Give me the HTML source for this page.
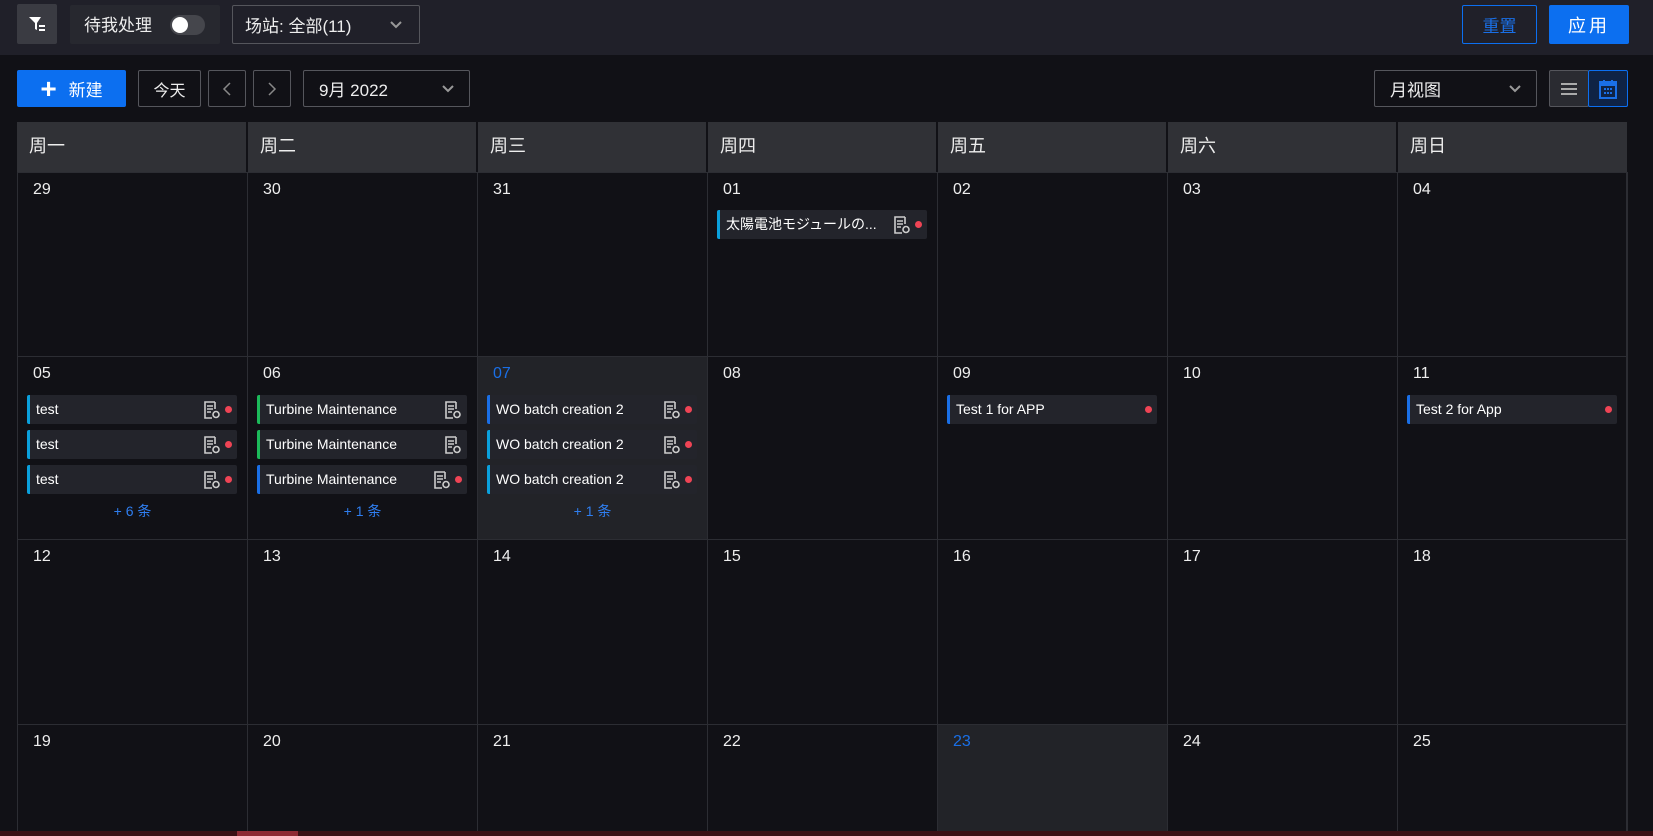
<!DOCTYPE html>
<html><head><meta charset="utf-8"><style>
*{box-sizing:border-box;margin:0;padding:0}
body{width:1653px;height:836px;background:#111116;font-family:"Liberation Sans","Noto Sans CJK SC",sans-serif;color:#fff;position:relative;overflow:hidden}
.a{position:absolute}
.top{left:0;top:0;width:1653px;height:55px;background:#202029}
.btn{position:absolute;border:1px solid #55565c;border-radius:2px;display:flex;align-items:center;justify-content:center;font-size:16px;color:#eee}
.hd{position:absolute;top:122px;height:50px;background:#303136;font-size:18px;padding-left:12px;line-height:48px;color:#eee}
.cell{position:absolute;border-left:1px solid #2c2d33;border-top:1px solid #2c2d33}
.dn{position:absolute;left:15px;top:8px;font-size:16px;color:#eee}
.ev{position:absolute;left:9px;width:210px;height:29px;background:#23242b;border-radius:2px;border-left:3px solid #0aa0dc;font-size:14px;line-height:29px;padding-left:6px;color:#fff;white-space:nowrap}
.ev svg{position:absolute;top:6px}
.dot{position:absolute;right:5px;top:11px;width:7px;height:7px;border-radius:50%;background:#ef4455}
.more{position:absolute;width:100%;text-align:center;font-size:14px;color:#2f7ef0}
</style></head><body>
<div class="a top"></div>
<div class="a" style="left:17px;top:4px;width:40px;height:40px;background:#3a3b42;border-radius:2px"></div>
<svg class="a" style="left:27px;top:14px" width="20" height="20" viewBox="0 0 20 20"><path d="M2 3h12l-4 6v7l-2-1V9z" fill="#fff"/><rect x="12" y="11" width="6" height="2" fill="#fff"/><rect x="12" y="15" width="6" height="2" fill="#fff"/></svg>
<div class="a" style="left:70px;top:5px;width:150px;height:39px;background:#27282f;border-radius:2px"></div>
<div class="a" style="left:84px;top:11px;font-size:17px;color:#eee">待我处理</div>
<div class="a" style="left:170px;top:15px;width:35px;height:20px;border-radius:10px;background:#45464c"></div>
<div class="a" style="left:172px;top:17px;width:16px;height:16px;border-radius:50%;background:#fff"></div>
<div class="btn" style="left:232px;top:5px;width:188px;height:39px;justify-content:flex-start;padding-left:12px;font-size:17px">场站: 全部(11)</div>
<svg class="a" style="left:389px;top:20px" width="14" height="10"><path d="M2 2l5 5 5-5" stroke="#999" stroke-width="2" fill="none"/></svg>
<div class="btn" style="left:1462px;top:5px;width:75px;height:39px;border-color:#0c6ff0;color:#1a6fe6;font-size:17px">重置</div>
<div class="btn" style="left:1549px;top:5px;width:80px;height:39px;border:none;background:#0c6ff0;color:#fff;font-size:18px;letter-spacing:3px">应用</div>

<div class="btn" style="left:17px;top:70px;width:109px;height:37px;border:none;background:#0c6ff0;color:#fff;font-size:17px"><span style="font-size:28px;font-weight:bold;margin-right:12px;line-height:20px">+</span>新建</div>
<div class="btn" style="left:138px;top:70px;width:63px;height:37px">今天</div>
<div class="btn" style="left:208px;top:70px;width:38px;height:37px"><svg width="10" height="16"><path d="M8 2L2 8l6 6" stroke="#888" stroke-width="1.5" fill="none"/></svg></div>
<div class="btn" style="left:253px;top:70px;width:38px;height:37px"><svg width="10" height="16"><path d="M2 2l6 6-6 6" stroke="#888" stroke-width="1.5" fill="none"/></svg></div>
<div class="btn" style="left:303px;top:70px;width:167px;height:37px;justify-content:flex-start;padding-left:15px;font-size:17px">9月 2022</div>
<svg class="a" style="left:441px;top:84px" width="14" height="10"><path d="M2 2l5 5 5-5" stroke="#999" stroke-width="2" fill="none"/></svg>
<div class="btn" style="left:1374px;top:70px;width:163px;height:37px;justify-content:flex-start;padding-left:15px;font-size:17px">月视图</div>
<svg class="a" style="left:1508px;top:84px" width="14" height="10"><path d="M2 2l5 5 5-5" stroke="#999" stroke-width="2" fill="none"/></svg>
<div class="btn" style="left:1549px;top:70px;width:40px;height:37px;background:#2a2b31"><svg width="18" height="14"><path d="M1 2h16M1 7h16M1 12h16" stroke="#aaa" stroke-width="2"/></svg></div>
<div class="btn" style="left:1588px;top:70px;width:40px;height:37px;border-color:#0c6ff0;background:#0f2345"><svg width="18" height="20" viewBox="0 0 18 20"><rect x="1" y="3" width="16" height="16" fill="none" stroke="#1a6fe6" stroke-width="2"/><rect x="1" y="3" width="16" height="4" fill="#1a6fe6"/><path d="M5 1v4M13 1v4" stroke="#1a6fe6" stroke-width="2"/><path d="M5 10h2M8 10h2M11 10h2M5 14h2M8 14h2M11 14h2" stroke="#1a6fe6" stroke-width="2"/></svg></div>

<div class="hd" style="left:17px;width:229px">周一</div>
<div class="hd" style="left:248px;width:228px">周二</div>
<div class="hd" style="left:478px;width:228px">周三</div>
<div class="hd" style="left:708px;width:228px">周四</div>
<div class="hd" style="left:938px;width:228px">周五</div>
<div class="hd" style="left:1168px;width:228px">周六</div>
<div class="hd" style="left:1398px;width:229px">周日</div>

<div id="g"></div>
<div class="a" style="left:1626px;top:172px;width:2px;height:660px;background:#2c2d33"></div>
<div class="a" style="left:0;top:831px;width:1653px;height:5px;background:#3a1015"></div>
<div class="a" style="left:237px;top:831px;width:61px;height:5px;background:#8e2a35"></div>
<script>
var ic='<svg width="16" height="18" viewBox="0 0 16 18"><path d="M11 1H1v16h7" fill="none" stroke="#ccc" stroke-width="1.6"/><path d="M11 1v7" stroke="#ccc" stroke-width="1.6"/><path d="M3 5h6M3 8h6M3 11h4" stroke="#ccc" stroke-width="1.4"/><circle cx="12" cy="13.5" r="3" fill="#23242b" stroke="#ccc" stroke-width="1.6"/></svg>';
var rows=[[172,184,['29','30','31','01','02','03','04']],[356,183,['05','06','07','08','09','10','11']],[539,185,['12','13','14','15','16','17','18']],[724,110,['19','20','21','22','23','24','25']]];
var ev={'01':[['太陽電池モジュールの...','#0aa0dc',1,1]],
'05':[['test','#0aa0dc',1,1],['test','#0aa0dc',1,1],['test','#0aa0dc',1,1],'+ 6 条'],
'06':[['Turbine Maintenance','#1cba5a',1,0],['Turbine Maintenance','#1cba5a',1,0],['Turbine Maintenance','#1a6fe6',1,1],'+ 1 条'],
'07':[['WO batch creation 2','#1a6fe6',1,1],['WO batch creation 2','#0aa0dc',1,1],['WO batch creation 2','#0aa0dc',1,1],'+ 1 条'],
'09':[['Test 1 for APP','#1a6fe6',0,1]],'11':[['Test 2 for App','#1a6fe6',0,1]]};
var h='';
rows.forEach(function(r){for(var i=0;i<7;i++){var d=r[2][i];var x=17+i*230;var hl=(d=='07'&&r[0]==356)||d=='23';
h+='<div class="cell" style="left:'+x+'px;top:'+r[0]+'px;width:230px;height:'+r[1]+'px;background:'+(hl?'#222328':'#111116')+'"><div class="dn" style="color:'+(hl?'#1a6fe6':'#eee')+'">'+d+'</div>';
(ev[d]||[]).forEach(function(e,k){if(typeof e=='string'){h+='<div class="more" style="top:'+(38+k*35+1)+'px">'+e+'</div>';return;}
var t=38+k*35;if(r[0]==172)t=37;
h+='<div class="ev" style="top:'+t+'px;border-left-color:'+e[1]+'">'+e[0]+(e[2]?'<svg style="right:'+(e[3]?17:6)+'px" width="16" height="18">'+ic.slice(ic.indexOf('>')+1):'')+(e[3]?'<div class="dot"></div>':'')+'</div>';});
h+='</div>';}});
document.getElementById('g').innerHTML=h;
</script>
</body></html>
